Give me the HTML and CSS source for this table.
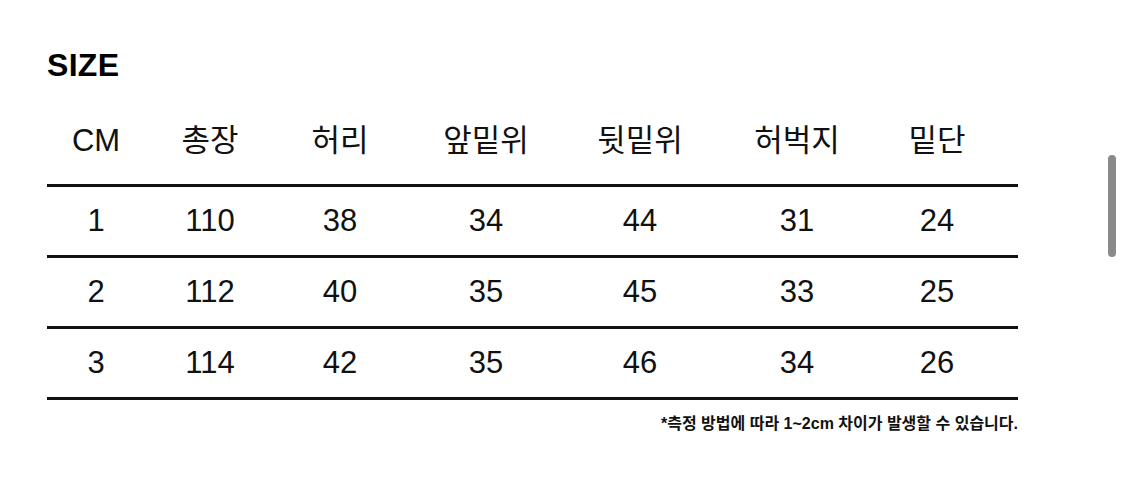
FILE: index.html
```html
<!DOCTYPE html>
<html lang="ko">
<head>
<meta charset="utf-8">
<link rel="stylesheet" href="styles.css">
</head>
<body>
<div class="page">
  <h1 class="title">SIZE</h1>
  <div class="table">
    <div class="row head">
      <span>CM</span><span>총장</span><span>허리</span><span>앞밑위</span><span>뒷밑위</span><span>허벅지</span><span>밑단</span>
    </div>
    <div class="row">
      <span>1</span><span>110</span><span>38</span><span>34</span><span>44</span><span>31</span><span>24</span>
    </div>
    <div class="row">
      <span>2</span><span>112</span><span>40</span><span>35</span><span>45</span><span>33</span><span>25</span>
    </div>
    <div class="row">
      <span>3</span><span>114</span><span>42</span><span>35</span><span>46</span><span>34</span><span>26</span>
    </div>
  </div>
  <p class="note">*측정 방법에 따라 1~2cm 차이가 발생할 수 있습니다.</p>
</div>
<div class="scrollbar"></div>
</body>
</html>
```

FILE: styles.css
```css
html, body {
  margin: 0;
  padding: 0;
  background: #ffffff;
}
body {
  width: 1125px;
  height: 485px;
  overflow: hidden;
  position: relative;
  font-family: "Liberation Sans", "Noto Sans CJK KR", sans-serif;
  color: #111111;
}
.page {
  padding: 47px 0 0 47px;
  width: 971px;
}
.title {
  margin: 0;
  font-size: 32px;
  font-weight: 700;
  line-height: 36px;
  letter-spacing: 0.3px;
  color: #000;
}
.table {
  margin-top: 40px;
}
.row {
  display: grid;
  grid-template-columns: 98px 130px 130px 162px 146px 168px 112px 1fr;
  height: 71px;
  align-items: center;
  border-bottom: 3px solid #111;
  box-sizing: border-box;
  font-size: 31px;
}
.row.head {
  height: 64px;
  align-items: start;
}
.row span {
  text-align: center;
  line-height: 36px;
}
.note {
  margin: 13px 0 0 0;
  text-align: right;
  font-size: 16px;
  font-weight: 700;
  line-height: 22px;
  letter-spacing: 0;
}
.scrollbar {
  position: absolute;
  left: 1108px;
  top: 155px;
  width: 8px;
  height: 102px;
  border-radius: 4px;
  background: #8a8a8a;
}
```
